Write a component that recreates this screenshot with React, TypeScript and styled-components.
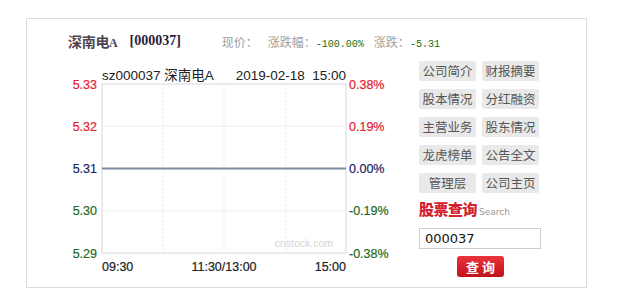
import React from "react";
import styled, { createGlobalStyle } from "styled-components";

const GlobalStyle = createGlobalStyle`
  body {
    margin: 0;
    background: #fff;
    font-family: "Noto Sans CJK SC", "Liberation Sans", sans-serif;
  }
`;

const links = [
  "公司简介", "财报摘要",
  "股本情况", "分红融资",
  "主营业务", "股东情况",
  "龙虎榜单", "公告全文",
  "管理层", "公司主页",
];

const leftTicks = [
  { v: "5.33", c: "#e3212f" },
  { v: "5.32", c: "#e3212f" },
  { v: "5.31", c: "#1c2466" },
  { v: "5.30", c: "#1f6b1f" },
  { v: "5.29", c: "#1f6b1f" },
];

const rightTicks = [
  { v: "0.38%", c: "#e3212f" },
  { v: "0.19%", c: "#e3212f" },
  { v: "0.00%", c: "#1c2466" },
  { v: "-0.19%", c: "#1f6b1f" },
  { v: "-0.38%", c: "#1f6b1f" },
];

const PLOT = { left: 42, right: 286, top: 24, bottom: 193 };
const FONT = "'Liberation Sans', 'Noto Sans CJK SC', sans-serif";

// tick / axis label: slightly heavier than regular, like the original gif
const Label = ({ x, y, c, anchor, children }: { x: number; y: number; c: string; anchor?: "start" | "middle" | "end"; children: React.ReactNode }) => (
  <text x={x} y={y} fontSize="12.5" fill={c} stroke={c} strokeWidth="0.2" fontFamily={FONT} textAnchor={anchor}>
    {children}
  </text>
);

const Chart = () => {
  const step = (PLOT.bottom - PLOT.top) / 4;
  const cols = [103, 164, 226];
  return (
    <svg width="340" height="215" viewBox="0 0 340 215">
      <text x={PLOT.left} y={20} fontSize="13.5" fill="#222" fontFamily={FONT}>
        sz000037 深南电A
      </text>
      <text x={PLOT.right} y={20} fontSize="13.5" fill="#222" fontFamily={FONT} textAnchor="end" xmlSpace="preserve">
        2019-02-18  15:00
      </text>
      <rect
        x={PLOT.left}
        y={PLOT.top}
        width={PLOT.right - PLOT.left}
        height={PLOT.bottom - PLOT.top}
        fill="#fff"
        stroke="#d6d8e0"
        strokeWidth="1"
      />
      {[1, 2, 3].map((i) => (
        <line key={i} x1={PLOT.left} x2={PLOT.right} y1={PLOT.top + step * i} y2={PLOT.top + step * i} stroke="#eceef2" />
      ))}
      {cols.map((x) => (
        <line key={x} x1={x} x2={x} y1={PLOT.top} y2={PLOT.bottom} stroke="#e6e8ee" strokeDasharray="2 2" />
      ))}
      <line
        x1={PLOT.left}
        x2={PLOT.right}
        y1={PLOT.top + step * 2}
        y2={PLOT.top + step * 2}
        stroke="#7f8ba0"
        strokeWidth="2"
      />
      <text x={273} y={187} fontSize="10.5" fill="#d4d4d4" fontFamily={FONT} textAnchor="end">
        cnstock.com
      </text>
      {leftTicks.map((t, i) => (
        <Label key={t.v} x={37} y={PLOT.top + step * i + 4.5} c={t.c} anchor="end">
          {t.v}
        </Label>
      ))}
      {rightTicks.map((t, i) => (
        <Label key={t.v} x={289} y={PLOT.top + step * i + 4.5} c={t.c}>
          {t.v}
        </Label>
      ))}
      <Label x={PLOT.left} y={211} c="#222">
        09:30
      </Label>
      <Label x={164} y={211} c="#222" anchor="middle">
        11:30/13:00
      </Label>
      <Label x={PLOT.right} y={211} c="#222" anchor="end">
        15:00
      </Label>
    </svg>
  );
};

export default function App() {
  return (
    <Page>
      <GlobalStyle />
      <Box>
        <Header>
          <StockName>
            深南电<small>A</small>
          </StockName>
          <Code>[000037]</Code>
          <Stats>
            <Stat>现价：</Stat>
            <Stat>
              涨跌幅：<Num>-100.00%</Num>
            </Stat>
            <Stat>
              涨跌：<Num>-5.31</Num>
            </Stat>
          </Stats>
        </Header>
        <Body>
          <Chart />
          <Side>
            <LinkGrid>
              {links.map((l) => (
                <LinkButton key={l}>{l}</LinkButton>
              ))}
            </LinkGrid>
            <SearchTitle>
              股票查询<span>Search</span>
            </SearchTitle>
            <SearchInput defaultValue="000037" />
            <QueryButton>查 询</QueryButton>
          </Side>
        </Body>
      </Box>
    </Page>
  );
}

const Page = styled.div`
  padding: 18px 0 0 26px;
`;

const Box = styled.div`
  width: 559px;
  height: 268px;
  border: 1px solid #dddddd;
`;

const Header = styled.div`
  display: flex;
  align-items: center;
  height: 20px;
  padding: 12px 0 0 41px;
`;

const StockName = styled.span`
  font-family: "Noto Sans CJK SC", sans-serif;
  font-size: 14px;
  font-weight: 700;
  color: #4d4150;
  letter-spacing: -0.3px;

  small {
    font-family: "Liberation Serif", serif;
    font-size: 12px;
    font-weight: 700;
  }
`;

const Code = styled.span`
  margin-left: 12px;
  font-family: "Liberation Serif", serif;
  font-size: 14px;
  font-weight: 700;
  color: #2a1d3c;
`;

const Stats = styled.div`
  display: flex;
  gap: 10px;
  margin-left: 41px;
`;

const Stat = styled.span`
  font-size: 12px;
  color: #a0a0a0;
`;

const Num = styled.span`
  font-family: "Liberation Mono", monospace;
  font-size: 10px;
  color: #107010;
`;

const Body = styled.div`
  display: flex;
  margin-top: 9px;
  padding-left: 33px;
`;

const Side = styled.div`
  display: flex;
  flex-direction: column;
  margin-left: 19px;
  padding-top: 1px;
`;

const LinkGrid = styled.div`
  display: grid;
  grid-template-columns: 57px 57px;
  column-gap: 6px;
  row-gap: 8px;
`;

const LinkButton = styled.div`
  height: 20px;
  line-height: 20px;
  text-align: center;
  background: #e9e9e9;
  border-radius: 2px;
  font-size: 12.5px;
  color: #555;
`;

const SearchTitle = styled.div`
  margin-top: 6px;
  height: 20px;
  line-height: 20px;
  font-size: 15px;
  font-weight: 900;
  color: #d3222e;
  letter-spacing: -0.5px;

  span {
    margin-left: 2px;
    font-family: "DejaVu Sans", sans-serif;
    font-size: 9px;
    font-weight: 400;
    color: #999;
    letter-spacing: 0;
  }
`;

const SearchInput = styled.input`
  margin-top: 9px;
  box-sizing: border-box;
  width: 122px;
  height: 21px;
  padding: 0 5px;
  border: 1px solid #cccccc;
  font-family: "DejaVu Sans", sans-serif;
  font-size: 13px;
  color: #111;
  outline: none;
`;

const QueryButton = styled.button`
  margin: 7px 0 0 38px;
  width: 47px;
  height: 21px;
  padding: 0;
  border: none;
  border-radius: 3px;
  background: linear-gradient(#e8333c, #c2121c);
  color: #fff;
  font-family: "Noto Sans CJK SC", sans-serif;
  font-size: 13px;
  font-weight: 700;
  line-height: 21px;
`;
